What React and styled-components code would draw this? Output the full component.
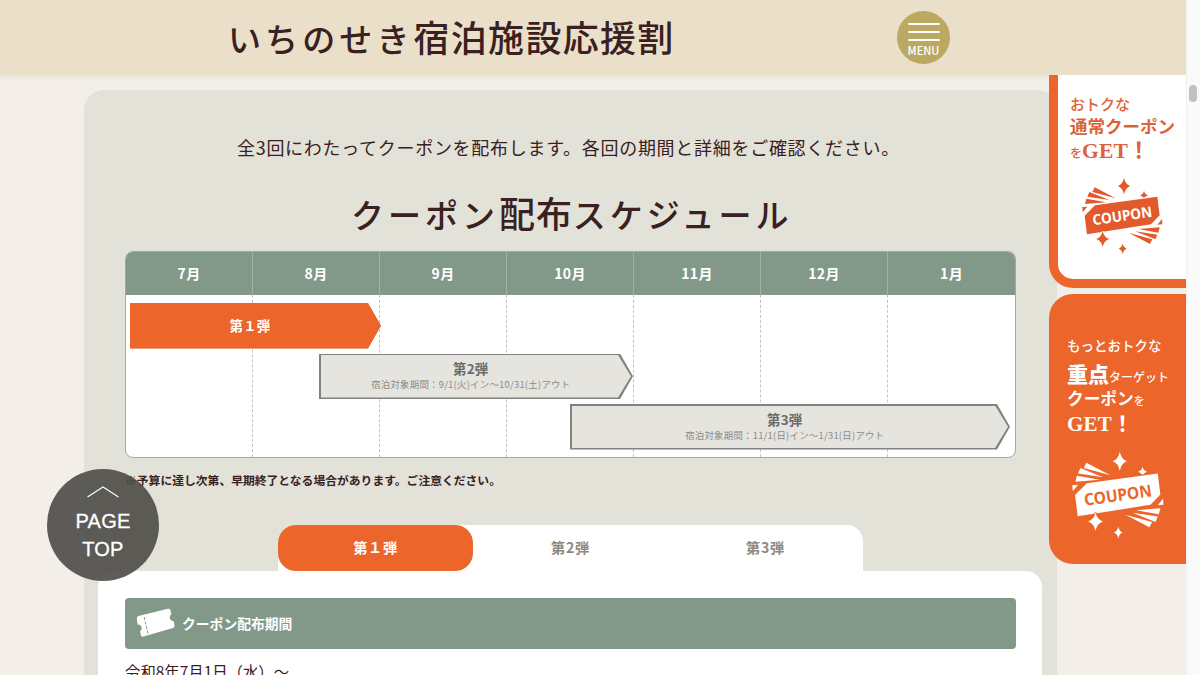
import React from "react";
import styled, { createGlobalStyle, css } from "styled-components";

const c = {
  orange: "#ec652b",
  green: "#82998a",
  ink: "#3a2020",
  panel: "#e2e2d9",
  sand: "#eadfc9",
};

const Global = createGlobalStyle`
  * { box-sizing: border-box; }
  body {
    margin: 0;
    font-family: "Noto Sans CJK JP", sans-serif;
    color: ${c.ink};
  }
  h1, h2, h3, p { margin: 0; font-weight: inherit; }
  button { font: inherit; border: 0; padding: 0; background: none; color: inherit; }
`;

const Window = styled.div`
  display: flex;
  width: 1200px;
  height: 675px;
  overflow: hidden;
`;

const Page = styled.div`
  position: relative;
  width: 1186px;
  background: #f3efe8;
  overflow: hidden;
`;

const ScrollTrack = styled.div`
  flex: 1;
  padding: 85px 0 0 2px;
  background: #fafafa;
  border-left: 1px solid #efefef;
`;

const ScrollThumb = styled.div`
  width: 8px;
  height: 17px;
  border-radius: 4px;
  background: #c1c1c1;
`;

const Header = styled.header`
  display: flex;
  align-items: center;
  justify-content: space-between;
  height: 75px;
  padding: 0 236px 0 228px;
  background: ${c.sand};
  box-shadow: 0 1px 5px rgba(120, 100, 70, 0.14);
`;

const SiteTitle = styled.h1`
  font-size: 36px;
  line-height: 73px;
  height: 75px;
  letter-spacing: 1.3px;
  font-weight: 500;
  white-space: nowrap;
`;

const Kana = styled.span`
  font-size: 33px;
  letter-spacing: ${(p) => p.$track}px;
`;

const MenuButton = styled.button`
  display: flex;
  flex-direction: column;
  align-items: center;
  gap: 6px;
  width: 53px;
  height: 53px;
  padding-top: 12px;
  border-radius: 50%;
  background: #bba962;
  color: #fff;
  font: 500 11px/10px "Noto Sans CJK JP", sans-serif;
`;

const MenuLine = styled.span`
  width: 32px;
  height: 2px;
  border-radius: 1px;
  background: #fff;
`;

const MenuLabel = styled.span`
  margin-top: -2px;
`;

const Schedule = styled.main`
  display: flex;
  flex-direction: column;
  width: 973px;
  height: 640px;
  margin: 15px 0 0 84px;
  padding: 42px 15px 0 14px;
  border-radius: 20px 20px 0 0;
  background: ${c.panel};
`;

const Lead = styled.p`
  padding-left: 139px;
  font-size: 18px;
  line-height: 30px;
  letter-spacing: 0.71px;
  white-space: nowrap;
`;

const Title = styled.h2`
  margin: 25px 0 14px;
  padding-left: 253px;
  font-size: 36px;
  line-height: 50px;
  height: 50px;
  letter-spacing: 0.9px;
  font-weight: 500;
  white-space: nowrap;
`;

const Chart = styled.section`
  width: 891px;
  height: 207px;
  margin-left: 27px;
  border: 1px solid #a3a8a0;
  border-radius: 8px;
  overflow: hidden;
  background: #fff;
`;

const Months = styled.div`
  display: grid;
  grid-template-columns: repeat(7, 1fr);
  height: 43px;
  background: ${c.green};
`;

const Month = styled.div`
  color: #fff;
  font-size: 14px;
  font-weight: 700;
  line-height: 43px;
  letter-spacing: 0.4px;
  text-align: center;
  &:not(:last-child) { border-right: 1px solid #a0b2a6; }
`;

const ChartBody = styled.div`
  display: grid;
  height: 162px;
`;

const Columns = styled.div`
  grid-area: 1 / 1;
  display: grid;
  grid-template-columns: repeat(7, 1fr);
`;

const Column = styled.div`
  &:not(:last-child) { border-right: 1px dashed #c4c4c4; }
`;

const Bars = styled.div`
  grid-area: 1 / 1;
  z-index: 1;
  display: flex;
  flex-direction: column;
  gap: 5px;
  padding: 8px 0 0 4px;
`;

const arrow = css`
  clip-path: polygon(0 0, calc(100% - 13px) 0, 100% 50%, calc(100% - 13px) 100%, 0 100%);
`;

const BarEdge = styled.div`
  ${arrow}
  width: ${(p) => p.$width}px;
  height: 45.5px;
  margin-left: ${(p) => p.$start}px;
  padding: ${(p) => (p.$active ? 0 : "1.5px 2px 1.5px 1.5px")};
  background: ${(p) => (p.$active ? c.orange : "#82827f")};
`;

const BarFace = styled.div`
  ${arrow}
  display: flex;
  flex-direction: column;
  align-items: center;
  justify-content: center;
  height: 100%;
  padding-right: ${(p) => (p.$active ? 11 : 10)}px;
  background: ${(p) => (p.$active ? c.orange : "#e5e4df")};
  color: ${(p) => (p.$active ? "#fff" : "#6b6b68")};
`;

const BarName = styled.div`
  font-size: 13.4px;
  font-weight: 700;
  line-height: 17px;
  letter-spacing: 0.3px;
`;

const BarDates = styled.div`
  color: #8b8b88;
  font-size: 9.4px;
  line-height: 15px;
  letter-spacing: 0.27px;
  white-space: nowrap;
`;

const Note = styled.p`
  padding: 12px 0 0 27px;
  font-size: 11.8px;
  font-weight: 700;
  line-height: 20px;
`;

const Tabs = styled.div`
  display: flex;
  flex: none;
  width: 585px;
  height: 46px;
  margin: 35px 0 0 180px;
  border-radius: 18px 16px 0 0;
  background: #fff;
`;

const Tab = styled.button`
  flex: 1;
  border-radius: 18px;
  background: ${(p) => (p.$active ? c.orange : "transparent")};
  color: ${(p) => (p.$active ? "#fff" : "#8f887f")};
  font-size: 14.2px;
  font-weight: 700;
  line-height: 44px;
  padding-bottom: 2px;
  letter-spacing: 0.7px;
`;

const TabPanel = styled.section`
  flex: 1;
  padding: 27px 26px 0 27px;
  border-radius: 16px 16px 0 0;
  background: #fff;
`;

const SectionHead = styled.h3`
  display: flex;
  align-items: center;
  gap: 7px;
  height: 51px;
  padding: 0 0 2px 11px;
  border-radius: 4px;
  background: ${c.green};
  color: #fff;
  font-size: 13.8px;
  font-weight: 700;
`;

const Period = styled.p`
  margin-top: 10px;
  font-size: 15.4px;
  line-height: 24px;
`;

const SideBanners = styled.aside`
  position: absolute;
  top: 75px;
  right: 0;
  display: flex;
  flex-direction: column;
  gap: 6px;
  width: 137px;
`;

const Banner = styled.a`
  display: flex;
  flex-direction: column;
  height: ${(p) => (p.$filled ? 270 : 213)}px;
  font-family: "Liberation Serif", "Noto Sans CJK JP", serif;
  white-space: nowrap;
  ${(p) =>
    p.$filled
      ? css`
          padding: 43px 0 0 18px;
          border-radius: 24px 0 0 24px;
          background: ${c.orange};
          color: #fff;
        `
      : css`
          padding: 20px 0 0 12px;
          border: solid ${c.orange};
          border-width: 0 0 9px 9px;
          border-radius: 0 0 0 24px;
          background: #fff;
          color: #dd623a;
        `}
`;

const BannerLine = styled.span`
  display: flex;
  align-items: baseline;
  height: ${(p) => p.$height}px;
  line-height: ${(p) => p.$height}px;
`;

const Word = styled.span`
  font-size: ${(p) => p.$size}px;
  font-weight: ${(p) => p.$weight || 500};
  letter-spacing: ${(p) => p.$track || 0}px;
`;

const BadgeSvg = styled.svg`
  flex: none;
  width: ${(p) => p.$width}px;
  height: ${(p) => p.$width * 0.9587}px;
  margin: ${(p) => p.$margin};
`;

const PageTop = styled.a`
  position: absolute;
  left: 47px;
  top: 469px;
  display: flex;
  flex-direction: column;
  align-items: center;
  width: 112px;
  height: 112px;
  padding-top: 17px;
  border-radius: 50%;
  background: rgba(70, 69, 65, 0.87);
  color: #fff;
  font: 20px/28px "Liberation Sans", sans-serif;
  text-align: center;
`;

const PageTopLabel = styled.span`
  margin-top: 9px;
  letter-spacing: 0.2px;
  -webkit-text-stroke: 0.3px #fff;
`;

const star = (x, y, w, h) =>
  `M${x} ${y - h}Q${x + w * 0.2} ${y - h * 0.2} ${x + w} ${y}Q${x + w * 0.2} ${y + h * 0.2} ${x} ${y + h}Q${x - w * 0.2} ${y + h * 0.2} ${x - w} ${y}Q${x - w * 0.2} ${y - h * 0.2} ${x} ${y - h}Z`;

const RAYS =
  "M164 353L157 367L227 386ZM148 367L142 381L208 391ZM139 387L135 403L199 398ZM127 412L142 411L128 428Z";

function CouponBadge({ width, margin, color, paper }) {
  return (
    <BadgeSvg $width={width} $margin={margin} viewBox="126 322 242 232">
      <g fill={color}>
        <path d={RAYS} />
        <path d={RAYS} transform="rotate(180 247 438)" />
        <path d={star(312, 377, 12, 14)} />
        <path
          d="M165 407L352 381L359 437L333 464L141 494L134 438Z"
          stroke={paper}
          strokeWidth="7"
          paintOrder="stroke"
        />
        <path
          d={star(188, 508, 20, 24)}
          stroke={paper}
          strokeWidth="4"
          paintOrder="stroke"
        />
        <path d={star(252, 349, 19, 25)} />
        <path d={star(248, 537, 12, 16)} />
      </g>
      <text
        x="247"
        y="454"
        transform="rotate(-8 247 438)"
        textAnchor="middle"
        textLength="180"
        lengthAdjust="spacingAndGlyphs"
        fontFamily="Noto Sans, sans-serif"
        fontWeight="700"
        fontSize="44"
        fill={paper}
      >
        COUPON
      </text>
    </BadgeSvg>
  );
}

function TicketIcon() {
  return (
    <svg width="39" height="30" viewBox="0 0 39 30">
      <path
        d="M2.5 8L32 .8Q33.8.4 34.4 2L35.4 6.2Q32.6 8.8 34.3 11.2Q35.7 13.4 37.8 13.2L38.5 17.5Q38.7 19.4 37 19.9L7.4 28.6Q5.3 29.2 4.8 27L4 23.4Q6.6 21.3 5.3 18.8Q4.3 16.6 1.7 16.6L.8 11Q.5 8.6 2.5 8Z"
        fill="#fff"
      />
      <path d="M8.2 9L12 26" stroke={c.green} strokeWidth="1" strokeDasharray="3 1.6" />
    </svg>
  );
}

const MONTHS = ["7月", "8月", "9月", "10月", "11月", "12月", "1月"];

const BARS = [
  { name: "第１弾", start: 0, width: 251, active: true },
  { name: "第2弾", start: 189, width: 314, dates: "宿泊対象期間：9/1(火)イン～10/31(土)アウト" },
  { name: "第3弾", start: 440, width: 440, dates: "宿泊対象期間：11/1(日)イン～1/31(日)アウト" },
];

export default function App() {
  return (
    <Window>
      <Global />
      <Page>
        <Header>
          <SiteTitle>
            <Kana $track={4.1}>いちのせき</Kana>宿泊施設応援割
          </SiteTitle>
          <MenuButton>
            <MenuLine />
            <MenuLine />
            <MenuLine />
            <MenuLabel>MENU</MenuLabel>
          </MenuButton>
        </Header>

        <Schedule>
          <Lead>全3回にわたってクーポンを配布します。各回の期間と詳細をご確認ください。</Lead>
          <Title>
            <Kana $track={4}>クーポン</Kana>配布<Kana $track={4}>スケジュール</Kana>
          </Title>
          <Chart>
            <Months>
              {MONTHS.map((m) => (
                <Month key={m}>{m}</Month>
              ))}
            </Months>
            <ChartBody>
              <Columns>
                {MONTHS.map((m) => (
                  <Column key={m} />
                ))}
              </Columns>
              <Bars>
                {BARS.map((b) => (
                  <BarEdge key={b.name} $start={b.start} $width={b.width} $active={b.active}>
                    <BarFace $active={b.active}>
                      <BarName>{b.name}</BarName>
                      {b.dates && <BarDates>{b.dates}</BarDates>}
                    </BarFace>
                  </BarEdge>
                ))}
              </Bars>
            </ChartBody>
          </Chart>
          <Note>※予算に達し次第、早期終了となる場合があります。ご注意ください。</Note>
          <Tabs>
            <Tab $active>第１弾</Tab>
            <Tab>第2弾</Tab>
            <Tab>第3弾</Tab>
          </Tabs>
          <TabPanel>
            <SectionHead>
              <TicketIcon />
              クーポン配布期間
            </SectionHead>
            <Period>令和8年7月1日（水）～</Period>
          </TabPanel>
        </Schedule>

        <SideBanners>
          <Banner>
            <BannerLine $height={20}>
              <Word $size={15}>おトクな</Word>
            </BannerLine>
            <BannerLine $height={25}>
              <Word $size={17.5} $weight={700}>通常クーポン</Word>
            </BannerLine>
            <BannerLine $height={23}>
              <Word $size={12}>を</Word>
              <Word $size={21.5} $weight={700} $track={0.2}>GET！</Word>
            </BannerLine>
            <CouponBadge width={80.7} margin="14px 0 0 12px" color="#e2592b" paper="#fff" />
          </Banner>
          <Banner $filled>
            <BannerLine $height={20}>
              <Word $size={13.5}>もっとおトクな</Word>
            </BannerLine>
            <BannerLine $height={36}>
              <Word $size={21} $weight={900}>重点</Word>
              <Word $size={12}>ターゲット</Word>
            </BannerLine>
            <BannerLine $height={14}>
              <Word $size={16.7} $weight={700}>クーポン</Word>
              <Word $size={11}>を</Word>
            </BannerLine>
            <BannerLine $height={34}>
              <Word $size={21} $weight={700} $track={0.2}>GET！</Word>
            </BannerLine>
            <CouponBadge width={91.8} margin="10px 0 0 5px" color="#fff" paper={c.orange} />
          </Banner>
        </SideBanners>

        <PageTop>
          <svg width="32" height="12" viewBox="0 0 32 12">
            <path d="M.5 11L16 1L31.5 11" fill="none" stroke="#fff" strokeWidth="1.1" />
          </svg>
          <PageTopLabel>
            PAGE
            <br />
            TOP
          </PageTopLabel>
        </PageTop>
      </Page>
      <ScrollTrack>
        <ScrollThumb />
      </ScrollTrack>
    </Window>
  );
}
